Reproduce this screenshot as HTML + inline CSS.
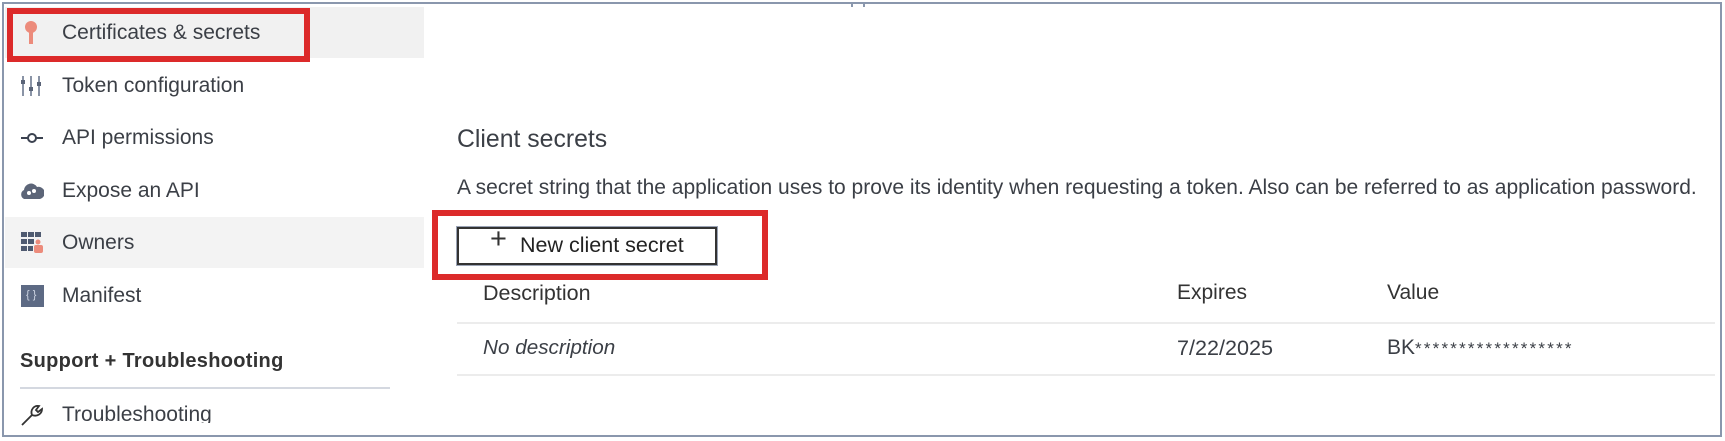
<!DOCTYPE html>
<html><head><style>
*{margin:0;padding:0;box-sizing:border-box}
body{width:1725px;height:441px;background:#fff;font-family:"Liberation Sans",sans-serif;color:#323130;position:relative;overflow:hidden}
.frame{position:absolute;left:2px;top:2px;width:1720px;height:435px;border:2px solid #8a97ad}
.a{position:absolute;white-space:nowrap;line-height:1.15}
.nav{font-size:21px;color:#3b3f46;left:62px}
.ic{position:absolute;left:20px}
</style></head><body>
<div class="frame"></div>
<div class="a" style="left:5px;top:7px;width:419px;height:51px;background:#f1f1f1"></div>
<div class="a" style="left:5px;top:217px;width:419px;height:51px;background:#f3f3f3"></div>
<div class="a" style="left:7px;top:8px;width:303px;height:54px;border:6px solid #dc2a2a"></div>
<div class="a" style="left:851px;top:2px;width:2px;height:5px;background:#8a97ad"></div>
<div class="a" style="left:863px;top:2px;width:2px;height:5px;background:#8a97ad"></div>

<svg class="ic" style="top:20px;left:23px" width="16" height="26" viewBox="0 0 16 26"><circle cx="8" cy="7" r="6" fill="#ec8b7b"/><rect x="6" y="10" width="4" height="14" fill="#ec8b7b"/></svg>
<div class="a nav" style="top:21px">Certificates &amp; secrets</div>

<svg class="ic" style="top:74px" width="22" height="24" viewBox="0 0 22 24"><g stroke="#8a94a6" stroke-width="2"><line x1="3" y1="2" x2="3" y2="22"/><line x1="11" y1="2" x2="11" y2="22"/><line x1="19" y1="2" x2="19" y2="22"/></g><g fill="#5a6478"><rect x="1" y="6" width="4" height="4"/><rect x="9" y="13" width="4" height="4"/><rect x="17" y="8" width="4" height="4"/></g></svg>
<div class="a nav" style="top:74px">Token configuration</div>

<svg class="ic" style="top:131px" width="24" height="14" viewBox="0 0 24 14"><line x1="1" y1="7" x2="23" y2="7" stroke="#3b4250" stroke-width="2"/><circle cx="12" cy="7" r="4" fill="#fff" stroke="#3b4250" stroke-width="2"/></svg>
<div class="a nav" style="top:126px">API permissions</div>

<svg class="ic" style="top:182px" width="24" height="18" viewBox="0 0 24 18"><path d="M4 17 A5 5 0 0 1 4 8 A7 7 0 0 1 17 5 A6 6 0 0 1 20 17Z" fill="#5c6578"/><circle cx="9" cy="11" r="2" fill="#fff"/><circle cx="14" cy="9" r="2" fill="#fff"/></svg>
<div class="a nav" style="top:179px">Expose an API</div>

<svg class="ic" style="top:231px" width="24" height="24" viewBox="0 0 24 24"><g fill="#4f5a70"><rect x="1" y="1" width="6" height="5"/><rect x="8" y="1" width="6" height="5"/><rect x="15" y="1" width="6" height="5"/><rect x="1" y="8" width="6" height="5"/><rect x="8" y="8" width="6" height="5"/><rect x="1" y="15" width="6" height="5"/><rect x="8" y="15" width="5" height="5"/></g><rect x="14" y="14" width="9" height="8" rx="2" fill="#ec8b7b"/><circle cx="18" cy="11" r="2.5" fill="#ec8b7b"/></svg>
<div class="a nav" style="top:231px">Owners</div>

<div class="a" style="left:21px;top:285px;width:23px;height:22px;background:#5d6a84"><span style="color:#cfd6e4;font-size:11px;position:absolute;left:5px;top:4px">{ }</span></div>
<div class="a nav" style="top:284px">Manifest</div>

<div class="a" style="left:20px;top:350px;font-size:20px;font-weight:bold;color:#333;letter-spacing:0.3px">Support + Troubleshooting</div>
<div class="a" style="left:20px;top:387px;width:370px;height:2px;background:#d4d8e0"></div>
<svg class="ic" style="top:403px" width="24" height="24" viewBox="0 0 24 24"><path d="M2 22 L12 12 M12 12 C10 7 14 2 19 3 L16 7 L18 9 L22 6 C22 11 17 14 12 12" fill="none" stroke="#333" stroke-width="1.8"/></svg>
<div class="a nav" style="top:403px;height:20px;overflow:hidden">Troubleshooting</div>

<div class="a" style="left:457px;top:126px;font-size:24.8px;color:#3b3f46">Client secrets</div>
<div class="a" style="left:457px;top:176px;font-size:21px;color:#3b3f46">A secret string that the application uses to prove its identity when requesting a token. Also can be referred to as application password.</div>

<div class="a" style="left:432px;top:210px;width:336px;height:70px;border:6px solid #dc2a2a"></div>
<div class="a" style="left:457px;top:227px;width:260px;height:38px;border:2px solid #333;outline:1px solid #9aa3b5"></div>
<div class="a" style="left:490px;top:223px;font-size:29px;font-weight:100;color:#333">+</div>
<div class="a" style="left:520px;top:233px;font-size:21.5px;color:#222">New client secret</div>

<div class="a" style="left:483px;top:281px;font-size:21.5px;color:#333">Description</div>
<div class="a" style="left:1177px;top:281px;font-size:21px;color:#333">Expires</div>
<div class="a" style="left:1387px;top:281px;font-size:21px;color:#333">Value</div>
<div class="a" style="left:457px;top:322px;width:1258px;height:2px;background:#ececec"></div>
<div class="a" style="left:483px;top:336px;font-size:20.7px;font-style:italic;color:#3b3f46">No description</div>
<div class="a" style="left:1177px;top:336px;font-size:21.6px;color:#3b3f46">7/22/2025</div>
<div class="a" style="left:1387px;top:336px;font-size:21px;color:#3b3f46">BK<span style="font-size:17px;letter-spacing:2.2px">******************</span></div>
<div class="a" style="left:457px;top:374px;width:1258px;height:2px;background:#ececec"></div>
</body></html>
